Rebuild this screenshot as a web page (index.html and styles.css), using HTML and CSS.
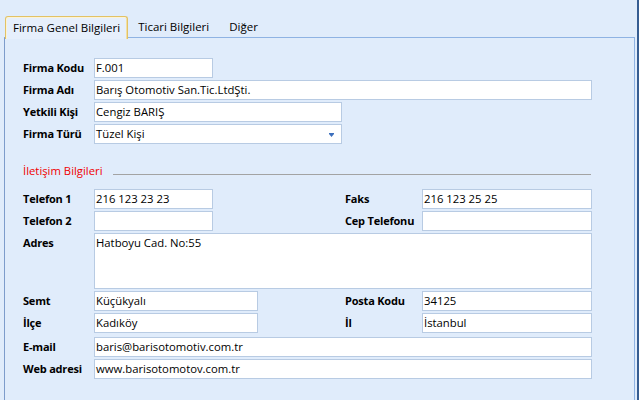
FILE: index.html
```html
<!DOCTYPE html>
<html lang="tr">
<head>
  <meta charset="UTF-8">
  <title>Firma Bilgileri</title>
  <link rel="stylesheet" href="styles.css">
</head>
<body>

  <div class="window">
    <div class="tabs">
      <span class="tab active">Firma Genel Bilgileri</span>
      <span class="tab">Ticari Bilgileri</span>
      <span class="tab">Diğer</span>
    </div>

    <div class="panel">
      <div class="form">
        <span class="label">Firma Kodu</span>
        <div class="field span-all w-short">F.001</div>

        <span class="label">Firma Adı</span>
        <div class="field span-all">Barış Otomotiv San.Tic.LtdŞti.</div>

        <span class="label">Yetkili Kişi</span>
        <div class="field span-all w-mid">Cengiz BARIŞ</div>

        <span class="label">Firma Türü</span>
        <div class="field span-all w-mid combo">Tüzel Kişi
          <svg class="combo-arrow" width="5" height="4" viewBox="0 0 5 4">
            <polygon points="0,0 5,0 5,1 2.5,4 0,1" fill="#3c6fbd"/>
          </svg>
        </div>
      </div>

      <div class="section">
        <span class="section-title">İletişim Bilgileri</span>
        <div class="section-line"></div>
      </div>

      <div class="form contact">
        <span class="label">Telefon 1</span>
        <div class="field w-short">216 123 23 23</div>
        <span class="label">Faks</span>
        <div class="field">216 123 25 25</div>

        <span class="label">Telefon 2</span>
        <div class="field w-short"></div>
        <span class="label">Cep Telefonu</span>
        <div class="field"></div>

        <span class="label">Adres</span>
        <div class="field span-all memo">Hatboyu Cad. No:55</div>

        <span class="label">Semt</span>
        <div class="field w-semt">Küçükyalı</div>
        <span class="label">Posta Kodu</span>
        <div class="field">34125</div>

        <span class="label">İlçe</span>
        <div class="field w-semt">Kadıköy</div>
        <span class="label">İl</span>
        <div class="field">İstanbul</div>
      </div>

      <div class="form web">
        <span class="label">E-mail</span>
        <div class="field span-all">baris@barisotomotiv.com.tr</div>

        <span class="label">Web adresi</span>
        <div class="field span-all">www.barisotomotov.com.tr</div>
      </div>
    </div>
  </div>

</body>
</html>
```

FILE: styles.css
```css
body {
  margin: 0;
  font-family: "Open Sans", "Liberation Sans", sans-serif;
  font-size: 11px;
  color: #000;
}

.window {
  width: 637px;
  height: 400px;
  background: #e0ecfb;
  border-right: 2px solid #365d92;
  overflow: hidden;
}

/* pestañas */
.tabs {
  display: flex;
  height: 21px;
  margin-top: 16px;
  padding-left: 5px;
}

.tab {
  padding: 0 10px;
  line-height: 21px;
  font-size: 11.5px;
  white-space: nowrap;
}

.tab.active {
  position: relative;
  height: 22px;
  margin-bottom: -1px;
  padding: 0 7px;
  border: 1px solid #e2c266;
  border-bottom: none;
  border-radius: 3px 3px 0 0;
  background: #e6effc;
  box-shadow: inset 1px 1px 0 #fbf3d6, inset -1px 0 0 #f3dfa2;
}

.panel {
  box-sizing: border-box;
  width: 631px;
  height: 400px;
  margin-left: 4px;
  padding: 20px 0 0 18px;
  border: 1px solid #8fb3e3;
  border-left-color: #7d9ccb;
  border-bottom: none;
}

/* formulario */
.form {
  display: grid;
  grid-template-columns: 71px 251px 77px 170px;
  row-gap: 2px;
}

.label {
  font-weight: bold;
  line-height: 20px;
  letter-spacing: -0.2px;
}

.field {
  position: relative;
  box-sizing: border-box;
  height: 20px;
  padding: 0 1px;
  border: 1px solid #b8cbe3;
  background: #fff;
  font-size: 11.3px;
  line-height: 18px;
  white-space: nowrap;
}

.span-all { grid-column: 2 / 5; }
.w-short { width: 119px; }
.w-mid { width: 248px; }
.w-semt { width: 164px; }

.memo { height: 56px; }

.combo-arrow {
  position: absolute;
  right: 7px;
  top: 8px;
}

.section {
  display: flex;
  align-items: flex-start;
  height: 18px;
  margin-top: 18px;
  width: 569px;
}

.section-title {
  color: #f00000;
  font-size: 11.3px;
  line-height: 18px;
}

.section-line {
  flex: 1;
  height: 1px;
  margin: 12px 1px 0 10px;
  background: #a3a3a3;
}

.contact { margin-top: 9px; }
.web { margin-top: 4px; }
```
